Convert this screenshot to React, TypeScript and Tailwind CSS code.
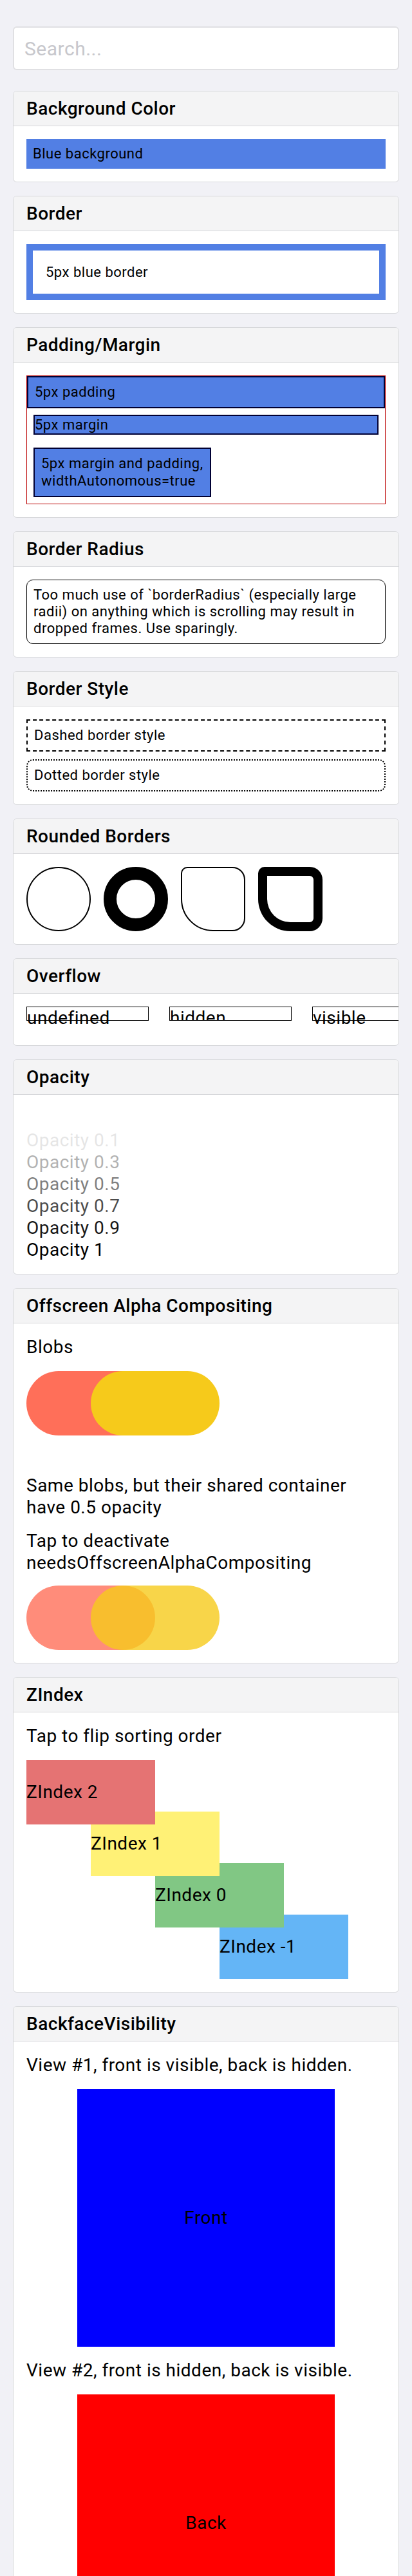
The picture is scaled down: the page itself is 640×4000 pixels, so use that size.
import type { ReactNode } from "react";

type CardProps = {
  title: string;
  children: ReactNode;
};

function Card({ title, children }: CardProps) {
  return (
    <div className="mx-[20px] mt-[21px] overflow-hidden rounded-[6px] border border-[#d6d7da] bg-white">
      <div className="border-b border-[#d6d7da] bg-[#f4f4f5] px-[20px] py-[10px] text-[28px] leading-[33px] font-medium tracking-[0.5px]">
        {title}
      </div>
      <div className="p-[20px]">{children}</div>
    </div>
  );
}

const blueBox = "border-2 border-[#000033] bg-[#527fe4]";
const zBox = "relative flex h-[100px] w-[200px] items-center";

export default function App() {
  return (
    <div className="min-h-screen bg-[#f1f1f6] pt-[41px] pb-[40px] font-['Roboto',sans-serif] text-[28px] leading-[34px] tracking-[0.5px] text-black">
      <div className="px-[20px]">
        <input
          type="text"
          placeholder="Search..."
          className="h-[68px] w-full rounded-[6px] border-2 border-[#e0e0e3] bg-white pl-[16px] text-[30px] tracking-[0.5px] placeholder:text-[#c7c7cc] focus:outline-none"
        />
      </div>

      <div className="pt-[11px]">
        <Card title="Background Color">
          <div className="bg-[#527fe4] p-[10px] text-[22px] leading-[26px]">
            Blue background
          </div>
        </Card>

        <Card title="Border">
          <div className="border-[10px] border-[#527fe4] p-[20px] text-[22px] leading-[27px]">
            5px blue border
          </div>
        </Card>

        <Card title="Padding/Margin">
          <div className="border border-[#bb0000] text-[22px] leading-[26px]">
            <div className={`${blueBox} p-[10px]`}>5px padding</div>
            <div className={`${blueBox} m-[10px] leading-[27px]`}>5px margin</div>
            <div className="flex">
              <div className={`${blueBox} m-[10px] p-[10px] leading-[26.5px]`}>
                5px margin and padding,
                <br />
                widthAutonomous=true
              </div>
            </div>
          </div>
        </Card>

        <Card title="Border Radius">
          <div className="rounded-[10px] border border-black p-[10px] text-[22px] leading-[26px]">
            Too much use of `borderRadius` (especially large
            <br />
            radii) on anything which is scrolling may result in
            <br />
            dropped frames. Use sparingly.
          </div>
        </Card>

        <Card title="Border Style">
          <div className="border-2 border-dashed border-black p-[10px] text-[22px] leading-[26px]">
            Dashed border style
          </div>
          <div className="mt-[12px] rounded-[10px] border-2 border-dotted border-black p-[10px] text-[22px] leading-[26px]">
            Dotted border style
          </div>
        </Card>

        <Card title="Rounded Borders">
          <div className="flex gap-[20px]">
            <div className="h-[100px] w-[100px] rounded-full border-2 border-black" />
            <div className="h-[100px] w-[100px] rounded-full border-[20px] border-black" />
            <div className="h-[100px] w-[100px] rounded-tl-[10px] rounded-tr-[20px] rounded-br-[20px] rounded-bl-[50px] border-2 border-black" />
            <div className="h-[100px] w-[100px] rounded-tl-[10px] rounded-tr-[20px] rounded-br-[20px] rounded-bl-[50px] border-[14px] border-black" />
          </div>
        </Card>

        <Card title="Overflow">
          <div className="mb-[18px] flex gap-[32px]">
            <div className="h-[22px] w-[190px] shrink-0 border border-black">
              <div className="w-[400px]">undefined</div>
            </div>
            <div className="h-[22px] w-[190px] shrink-0 overflow-hidden border border-black">
              <div className="w-[400px]">hidden</div>
            </div>
            <div className="h-[22px] w-[190px] shrink-0 border border-black">
              <div className="w-[400px]">visible</div>
            </div>
          </div>
        </Card>

        <Card title="Opacity">
          <div className="opacity-0">Opacity 0</div>
          <div className="opacity-10">Opacity 0.1</div>
          <div className="opacity-30">Opacity 0.3</div>
          <div className="opacity-50">Opacity 0.5</div>
          <div className="opacity-70">Opacity 0.7</div>
          <div className="opacity-90">Opacity 0.9</div>
          <div>Opacity 1</div>
        </Card>

        <Card title="Offscreen Alpha Compositing">
          <p>Blobs</p>
          <div className="mt-[20px] flex">
            <div className="h-[100px] w-[200px] shrink-0 rounded-full bg-[#ff6f59]" />
            <div className="-ml-[100px] h-[100px] w-[200px] shrink-0 rounded-full bg-[#f6ca1b]" />
          </div>
          <p className="mt-[61px]">
            Same blobs, but their shared container
            <br />
            have 0.5 opacity
          </p>
          <p className="mt-[18px]">
            Tap to deactivate
            <br />
            needsOffscreenAlphaCompositing
          </p>
          <div className="mt-[18px] flex">
            <div className="h-[100px] w-[200px] shrink-0 rounded-full bg-[#ff6f59] opacity-80" />
            <div className="-ml-[100px] h-[100px] w-[200px] shrink-0 rounded-full bg-[#f6ca1b] opacity-80" />
          </div>
        </Card>

        <Card title="ZIndex">
          <p>Tap to flip sorting order</p>
          {/* boxes step 100 right / 80 down, each overlapping the one below */}
          <div className="isolate mt-[20px] h-[340px]">
            <div className={`${zBox} z-[4] bg-[#e57373]`}>ZIndex 2</div>
            <div className={`${zBox} z-[3] -mt-[20px] ml-[100px] bg-[#fff176]`}>ZIndex 1</div>
            <div className={`${zBox} z-[2] -mt-[20px] ml-[200px] bg-[#81c784]`}>ZIndex 0</div>
            <div className={`${zBox} z-[1] -mt-[20px] ml-[300px] bg-[#64b5f6]`}>ZIndex -1</div>
          </div>
        </Card>

        <Card title="BackfaceVisibility">
          <p>View #1, front is visible, back is hidden.</p>
          <div className="mx-auto mt-[20px] flex h-[400px] w-[400px] items-center justify-center bg-[#0000ff]">
            Front
          </div>
          <p className="mt-[20px]">View #2, front is hidden, back is visible.</p>
          <div className="mx-auto mt-[20px] flex h-[400px] w-[400px] items-center justify-center bg-[#ff0000]">
            Back
          </div>
        </Card>
      </div>
    </div>
  );
}
